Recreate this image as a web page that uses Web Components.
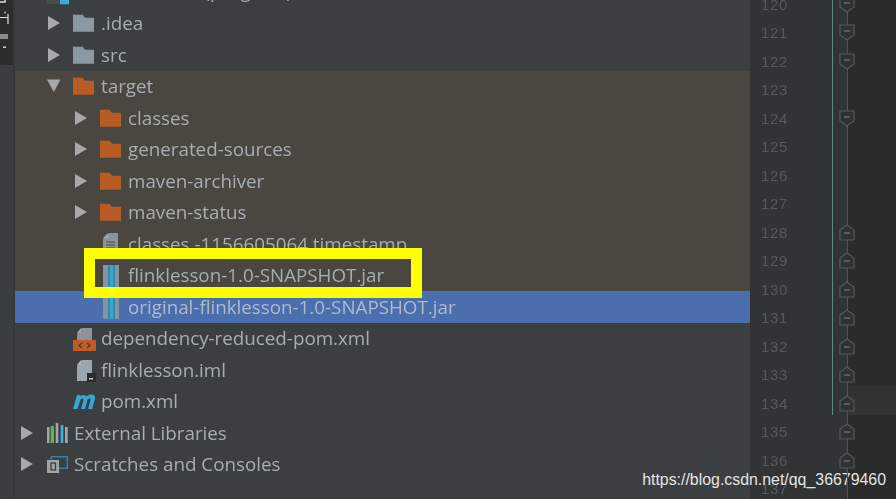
<!DOCTYPE html>
<html>
<head>
<meta charset="utf-8">
<style>
html, body { margin: 0; padding: 0; background: #3c3f41; }
body { width: 896px; height: 499px; overflow: hidden; }
ide-window { width: 896px; height: 499px; }
</style>
</head>
<body>
<ide-window>
    <project-tree slot="tree">
        <tree-row indent="0" arrow="none" icon="module" text="flinklesson-1.0 (program)" height="33.5"></tree-row>
        <tree-row indent="1" arrow="right" icon="folder" text=".idea"></tree-row>
        <tree-row indent="1" arrow="right" icon="folder" text="src"></tree-row>
        <tree-row indent="1" arrow="down" icon="folder-o" text="target" tint="ex"></tree-row>
        <tree-row indent="2" arrow="right" icon="folder-o" text="classes" tint="ex"></tree-row>
        <tree-row indent="2" arrow="right" icon="folder-o" text="generated-sources" tint="ex"></tree-row>
        <tree-row indent="2" arrow="right" icon="folder-o" text="maven-archiver" tint="ex"></tree-row>
        <tree-row indent="2" arrow="right" icon="folder-o" text="maven-status" tint="ex"></tree-row>
        <tree-row indent="2" arrow="none" icon="file" text="classes.-1156605064.timestamp" tint="ex"></tree-row>
        <tree-row indent="2" arrow="none" icon="jar" text="flinklesson-1.0-SNAPSHOT.jar" tint="ex"></tree-row>
        <tree-row indent="2" arrow="none" icon="jar" text="original-flinklesson-1.0-SNAPSHOT.jar" tint="sel"></tree-row>
        <tree-row indent="1" arrow="none" icon="xml" text="dependency-reduced-pom.xml"></tree-row>
        <tree-row indent="1" arrow="none" icon="iml" text="flinklesson.iml"></tree-row>
        <tree-row indent="1" arrow="none" icon="maven" text="pom.xml"></tree-row>
        <tree-row indent="0" arrow="right" icon="libs" text="External Libraries"></tree-row>
        <tree-row indent="0" arrow="right" icon="scratch" text="Scratches and Consoles"></tree-row>
    </project-tree>
    <editor-gutter slot="gutter"></editor-gutter>
</ide-window>

<script>
const ICONS = {
    module: '<rect x="2" y="10" width="13" height="15" fill="#4a4d50"/><rect x="15" y="10" width="9" height="15.300" fill="#3aa9dc"/>',
    folder: '<path d="M1 3.700h9.500l2.500 3h9v14H1z" fill="#8a9aa5"/>',
    'folder-o': '<path d="M1 3.700h9.500l2.500 3h9v14H1z" fill="#b85c26"/>',
    file: '<path d="M10 1h9v20H4V7z" fill="#8c9399"/><path d="M9 1v5H4z" fill="#a5a8aa"/><path d="M7 10h9M7 13h9M7 16h9" stroke="#4a4740"/>',
    jar: '<rect x="4" y="2" width="16" height="22" fill="#86939b"/><rect x="9" y="2" width="7" height="22" fill="#2a8fb8"/><path d="M11 3h3M11 5h3M11 7h3M11 9h3M11 11h3M11 13h3M11 15h3M11 17h3M11 19h3M11 21h3M11 23h3" stroke="#5fb6da"/>',
    xml: '<path d="M10 2h10v12H5V8z" fill="#8c9399"/><path d="M9 2v5H5z" fill="#a5a8aa"/><rect x="1" y="14" width="23" height="11" fill="#c15a24"/><path d="M10 17l-3 2.500 3 2.500M15 17l3 2.500-3 2.500" fill="none" stroke="#44403a" stroke-width="1.500"/>',
    iml: '<path d="M10 2h10v21H5V8z" fill="#9aa7b0"/><path d="M9 2v5H5z" fill="#b0b8bd"/><rect x="15" y="15" width="9" height="9" fill="#2b2b2b"/><rect x="17" y="20" width="4" height="1.500" fill="#ccc"/>',
    maven: '<path d="M1 20L5 6h3.500l-.4 1.600C10 5.500 13 5.200 14.500 7.500 16.500 5.500 20 5 22 6.200 23.500 7.500 23 9.500 22.600 11l-2.500 9h-4l2.500-9c.3-1.500-1.500-2-3-.4L13 20H9l2.500-9c.3-1.500-1.500-2-3-.4L5.500 20z" fill="#34a8d8"/>',
    libs: '<rect x="2" y="6" width="2.500" height="16" fill="#a0a7ac"/><rect x="5.700" y="5" width="3.300" height="17" fill="#67b346"/><rect x="10.700" y="2" width="2.600" height="20" fill="#a0a7ac"/><rect x="15.700" y="4" width="2.600" height="18" fill="#3fb1e0"/><rect x="20" y="6" width="2.700" height="16" fill="#a0a7ac"/>',
    scratch: '<path d="M6 4.700h16.300v11.600H13" fill="none" stroke="#3d7fa3" stroke-width="1.500"/><path d="M6 5v3" stroke="#3d7fa3" stroke-width="1.500"/><rect x="2" y="8" width="12" height="13" fill="#a0a5a8"/><rect x="6" y="11" width="4.500" height="7" fill="none" stroke="#3c3f41" stroke-width="1.300"/>'
};

class TreeRow extends HTMLElement {
    connectedCallback() {
        const indent = Number(this.getAttribute('indent'));
        const arrow = this.getAttribute('arrow');
        const icon = this.getAttribute('icon');
        const text = this.getAttribute('text');
        const tint = this.getAttribute('tint');
        const height = this.getAttribute('height') || '31.5';
        const bg = tint === 'ex' ? '#4a4740' : tint === 'sel' ? '#4b6eaf' : 'transparent';
        const glyph = arrow === 'right' ? '<path d="M0 1l12 7-12 7z"/>' : arrow === 'down' ? '<path d="M-1 1.500h13.500l-6.700 12.500z"/>' : '';
        const shadow = this.attachShadow({ mode: 'open' });
        shadow.innerHTML = `
            <style>
                :host {
                    display: flex;
                    align-items: center;
                    height: ${height}px;
                    padding-left: ${6 + indent * 27}px;
                    background: ${bg};
                    color: ${tint === 'sel' ? '#aebbca' : '#a6aeb4'};
                    font: 18.8px "Open Sans", sans-serif;
                    white-space: nowrap;
                }
                .arrow { width: 12px; height: 16px; fill: #a7a9ab; margin-right: 12px; flex: none; overflow: visible; }
                .icon { width: 24px; height: 24px; flex: none; margin-right: 5px; overflow: visible; }
                span { filter: blur(0.5px); }
            </style>
            <svg class="arrow" viewBox="0 0 12 16">${glyph}</svg>
            <svg class="icon" viewBox="0 0 24 24">${ICONS[icon]}</svg>
            <span>${text}</span>
        `;
    }
}
customElements.define('tree-row', TreeRow);

class ProjectTree extends HTMLElement {
    constructor() {
        super();
        this.attachShadow({ mode: 'open' }).innerHTML = `
            <style>
                :host { display: block; margin-top: -26px; }
            </style>
            <slot></slot>
        `;
    }
}
customElements.define('project-tree', ProjectTree);

class EditorGutter extends HTMLElement {
    constructor() {
        super();
        let rows = '';
        for (let n = 120; n <= 137; n++) {
            const down = n === 120 || n === 121 || n === 122 || n === 124;
            const up = n >= 128 && n <= 136;
            let mark = '';
            if (down) mark = '<path d="M1 1h14v10l-7 5-7-5z"/><path class="dash" d="M5 7h6"/>';
            if (up) mark = '<path d="M1 16h14V6l-7-5-7 5z"/><path class="dash" d="M5 9h6"/>';
            rows += `<div class="row ${n === 134 ? 'cur' : ''}">
                <span class="num">${n}</span>
                <div class="fold">${mark ? `<svg width="16" height="17" viewBox="0 0 16 17">${mark}</svg>` : ''}</div>
            </div>`;
        }
        this.attachShadow({ mode: 'open' }).innerHTML = `
            <style>
                :host { display: block; margin-top: -10px; position: relative; }
                .spine { position: absolute; left: 96px; top: 0; bottom: 0; width: 1px; background: #505254; z-index: 1; }
                .teal { position: absolute; left: 81px; top: 0; height: 425px; width: 1px; background: #5b8a80; }
                .row { display: flex; height: 28.5px; align-items: center; position: relative; }
                .num { width: 81px; padding-left: 10px; box-sizing: border-box; color: #565a5d; font: 15px "Liberation Sans", sans-serif; letter-spacing: 0.6px; filter: blur(0.4px); }
                .fold { width: 18px; margin-left: 7px; height: 17px; position: relative; z-index: 2; }
                svg { display: block; fill: #2f3132; stroke: #56585a; stroke-width: 1.2; }
                svg .dash { stroke: #77797b; }
                .cur::after { content: ""; position: absolute; left: 97px; right: 0; top: -3px; bottom: 3px; background: #323232; }
            </style>
            <div class="spine"></div>
            <div class="teal"></div>
            ${rows}
        `;
    }
}
customElements.define('editor-gutter', EditorGutter);

class IdeWindow extends HTMLElement {
    constructor() {
        super();
        this.attachShadow({ mode: 'open' }).innerHTML = `
            <style>
                :host { display: flex; position: relative; overflow: hidden; background: #3c3f41; }
                .strip { width: 13px; flex: none; background: linear-gradient(#2c2c2d 0, #2c2c2d 65px, #3b3e40 65px); border-right: 2px solid #35373a; overflow: hidden; }
                .strip svg { display: block; }
                .tree { width: 735px; flex: none; overflow: hidden; }
                .sep { width: 1px; flex: none; background: #323232; }
                .rest { flex: 1; overflow: hidden; background: linear-gradient(to right, #313335 0, #313335 97px, #2b2b2b 97px); }
                .mark {
                    position: absolute; left: 84px; top: 248px; width: 338px; height: 50px;
                    box-sizing: border-box; border: 11px solid #ffff00;
                }
                .wm {
                    position: absolute; right: 10px; top: 471px;
                    color: #e4e4e4; font: 15.9px "Liberation Sans", sans-serif; white-space: nowrap;
                }
            </style>
            <div class="strip">
                <svg width="13" height="60" viewBox="0 0 13 60">
                    <path d="M0 2h5V0" fill="none" stroke="#d8d8d8" stroke-width="1.500"/>
                    <path d="M5 11.500v2M0 17.500h8M8 14v10" fill="none" stroke="#e0e0e0" stroke-width="1.200"/>
                    <rect x="0" y="34" width="8" height="5" fill="#8a8a8a"/>
                    <rect x="3" y="46.500" width="3" height="1.500" fill="#d0d0d0"/>
                </svg>
            </div>
            <div class="tree"><slot name="tree"></slot></div>
            <div class="sep"></div>
            <div class="rest"><slot name="gutter"></slot></div>
            <div class="mark"></div>
            <div class="wm">https://blog.csdn.net/qq_36679460</div>
        `;
    }
}
customElements.define('ide-window', IdeWindow);
</script>
</body>
</html>
